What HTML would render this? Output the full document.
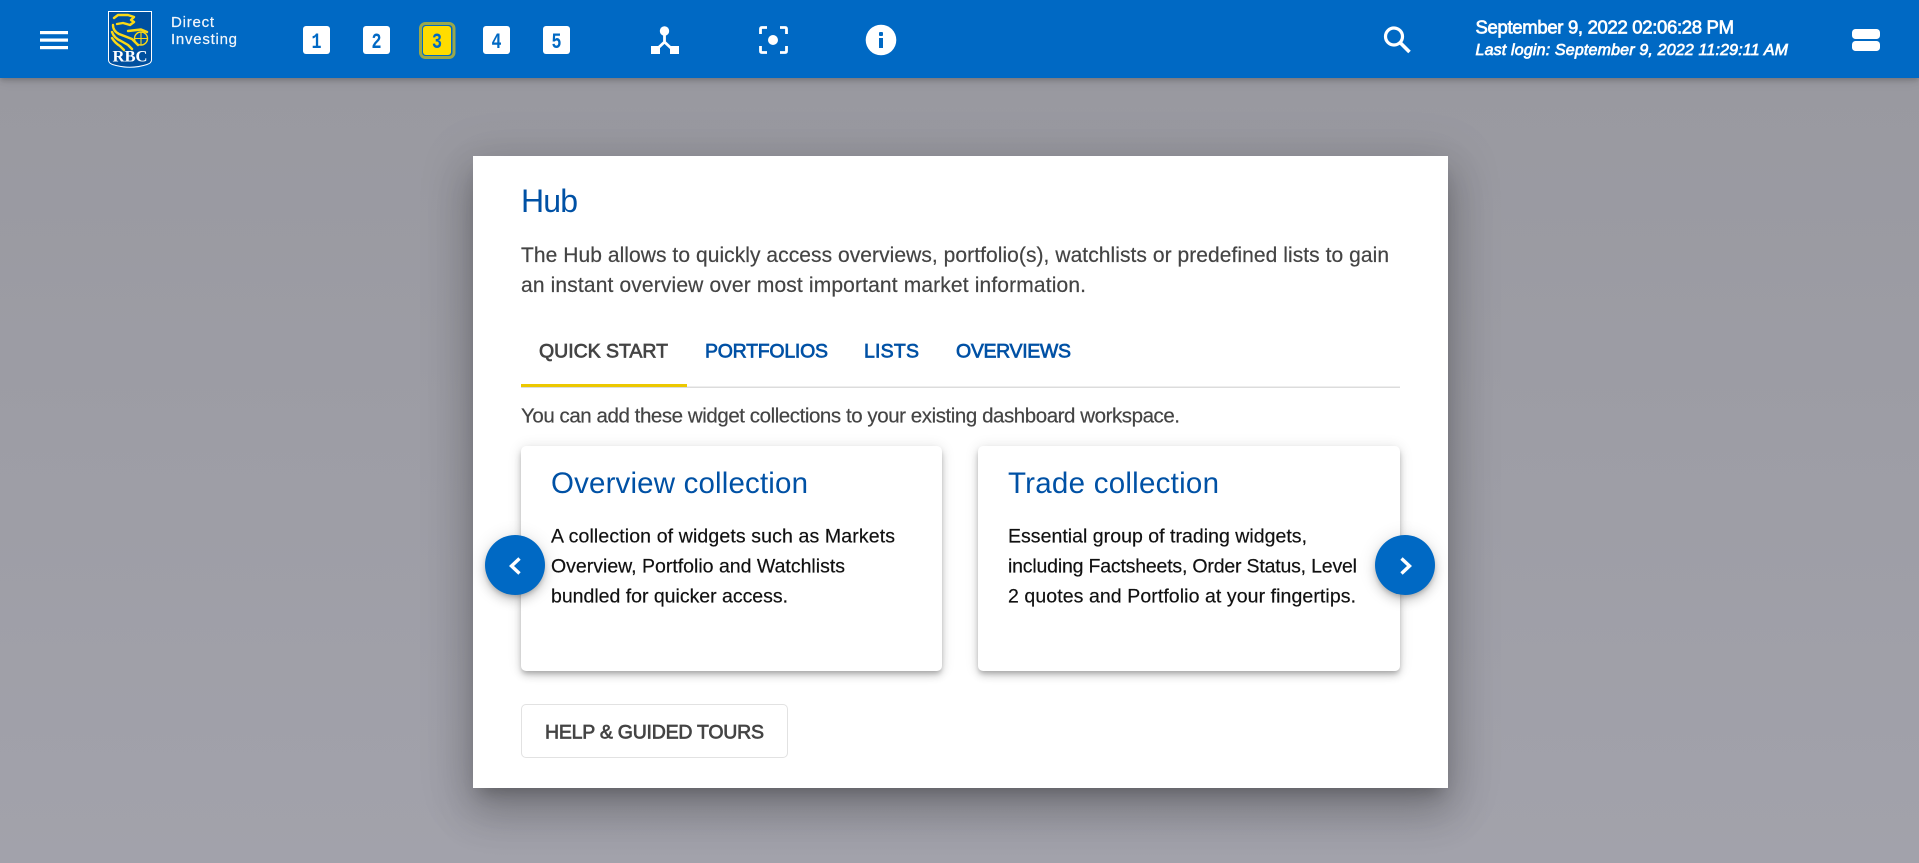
<!DOCTYPE html>
<html lang="en"><head><meta charset="utf-8"><title>Hub</title>
<style>
html,body{margin:0;padding:0;width:1919px;height:863px;overflow:hidden}
body{position:relative;background:linear-gradient(#98989f,#a2a2ab);font-family:"Liberation Sans",sans-serif}
.a{position:absolute;box-sizing:border-box}
#hd{left:0;top:0;width:1919px;height:78px;background:#0069c4;box-shadow:0 2px 4px -1px rgba(0,0,0,.14),0 4px 5px rgba(0,0,0,.08),0 1px 14px rgba(0,0,0,.08)}
#modal{left:473px;top:156px;width:975px;height:632px;background:#fff;box-shadow:0 11px 15px -7px rgba(0,0,0,.22),0 24px 38px 3px rgba(0,0,0,.17),0 9px 46px 8px rgba(0,0,0,.13)}
.card{top:446px;height:225px;background:#fff;border-radius:5px;box-shadow:0 3px 5px -1px rgba(0,0,0,.2),0 5px 8px rgba(0,0,0,.14),0 1px 14px rgba(0,0,0,.12)}
.fab{top:535px;width:60px;height:60px;border-radius:50%;background:#0069c4;box-shadow:0 3px 5px -1px rgba(0,0,0,.2),0 6px 10px rgba(0,0,0,.14),0 1px 18px rgba(0,0,0,.12)}
#btn{left:521px;top:704px;width:267px;height:54px;background:#fff;border:1px solid #e2e2e2;border-radius:5px}
#top{left:0;top:0;width:1919px;height:863px}
text{font-family:"Liberation Sans",sans-serif;white-space:pre}
.m{stroke-width:.7px;stroke:currentColor}
.r{stroke-width:.2px;stroke:currentColor}
</style></head><body>
<div class="a" id="hd"></div>
<div class="a" id="modal"></div>
<div class="a card" style="left:521px;width:421px"></div>
<div class="a card" style="left:978px;width:422px"></div>
<div class="a fab" style="left:485px"></div>
<div class="a fab" style="left:1375px"></div>
<div class="a" id="btn"></div>
<svg class="a" id="top" width="1919" height="863" viewBox="0 0 1919 863" xmlns="http://www.w3.org/2000/svg">
<!-- hamburger -->
<g fill="#fff"><rect x="40" y="31" width="28" height="3.200"/><rect x="40" y="38.500" width="28" height="3.200"/><rect x="40" y="46" width="28" height="3.200"/></g>
<!-- logo -->
<path d="M108.500 11.500H151.500V60Q151.500 63 147 64.500Q130 70 112.500 64.500Q108.500 63 108.500 60Z" fill="#00509f" stroke="#fff" stroke-width="1"/>
<g fill="none" stroke="#fbd914" stroke-width="2.400" stroke-linejoin="round" stroke-linecap="round">
<path d="M114 18L118 15H128L134 17L131 20L134 22L130 25L123 23L117 24"/>
<path d="M113 25Q113 31 119 34L132 39L138 45"/>
<path d="M112 32Q114 38 121 41L128 45L132 49"/>
<path d="M112 38Q115 43 120 46L124 50"/>
<path d="M128 31L141 29.500L147 32"/>
<circle cx="141" cy="38.500" r="6.500" stroke-width="1.400"/>
<path d="M134.500 38.500H147.500M141 32V45" stroke-width="1.100"/>
</g>
<text x="112.500" y="61.500" fill="#fff" font-size="16" font-weight="700" textLength="35" lengthAdjust="spacingAndGlyphs" style="font-family:'Liberation Serif',serif">RBC</text>
<text class="r" x="171" y="27" fill="#f2f6fb" color="#f2f6fb" font-size="15" textLength="43" lengthAdjust="spacing">Direct</text>
<text class="r" x="171" y="44" fill="#f2f6fb" color="#f2f6fb" font-size="15" textLength="66" lengthAdjust="spacing">Investing</text>
<!-- numbered workspaces -->
<rect x="303" y="26" width="27" height="28" rx="3" fill="#fff"/>
<rect x="363" y="26" width="27" height="28" rx="3" fill="#fff"/>
<rect x="420.500" y="23.500" width="33.500" height="34" rx="5" fill="#0069c4" stroke="#9aa84a" stroke-width="3"/>
<rect x="423" y="26" width="28" height="29" rx="3" fill="#ffdc00"/>
<rect x="483" y="26" width="27" height="28" rx="3" fill="#fff"/>
<rect x="543" y="26" width="27" height="28" rx="3" fill="#fff"/>
<g font-size="22" font-weight="700" fill="#0069c4">
<text x="311.500" y="48" textLength="10" lengthAdjust="spacingAndGlyphs" style="font-family:'Liberation Mono',monospace">1</text>
<text x="371.500" y="48" textLength="10" lengthAdjust="spacingAndGlyphs" style="font-family:'Liberation Mono',monospace">2</text>
<text x="432" y="48" textLength="10" lengthAdjust="spacingAndGlyphs" style="font-family:'Liberation Mono',monospace">3</text>
<text x="491.500" y="48" textLength="10" lengthAdjust="spacingAndGlyphs" style="font-family:'Liberation Mono',monospace">4</text>
<text x="551.500" y="48" textLength="10" lengthAdjust="spacingAndGlyphs" style="font-family:'Liberation Mono',monospace">5</text>
</g>
<!-- hierarchy icon -->
<g fill="#fff"><circle cx="664.500" cy="31" r="4.700"/><rect x="651" y="46" width="9" height="8"/><rect x="670" y="46" width="9" height="8"/></g>
<path d="M664.500 33V43M657 49L664.500 42L672 49" fill="none" stroke="#fff" stroke-width="2.800"/>
<!-- focus icon -->
<path d="M760.500 34V29Q760.500 27.500 762 27.500H767M780 27.500H785Q786.500 27.500 786.500 29V34M786.500 46V51Q786.500 52.500 785 52.500H780M767 52.500H762Q760.500 52.500 760.500 51V46" fill="none" stroke="#fff" stroke-width="2.800"/>
<circle cx="773" cy="40" r="5" fill="#fff"/>
<!-- info icon -->
<circle cx="881" cy="40" r="15.300" fill="#fff"/>
<rect x="879" y="38" width="4" height="10" fill="#0069c4"/><rect x="879" y="32" width="4" height="4" rx="1" fill="#0069c4"/>
<!-- search -->
<circle cx="1394" cy="36.500" r="8.500" fill="none" stroke="#fff" stroke-width="3.200"/>
<path d="M1400.500 43L1409.500 52" stroke="#fff" stroke-width="3.600" fill="none"/>
<!-- date -->
<text class="m" x="1475.500" y="33.500" fill="#fff" color="#fff" font-size="18.500" textLength="258.500" lengthAdjust="spacing">September 9, 2022 02:06:28 PM</text>
<text class="m" x="1475.500" y="55" fill="#fff" color="#fff" font-size="16" font-style="italic" textLength="312.500" lengthAdjust="spacing">Last login: September 9, 2022 11:29:11 AM</text>
<!-- server icon -->
<g fill="#fff"><rect x="1852" y="29" width="28" height="10" rx="3.500"/><rect x="1852" y="41" width="28" height="10" rx="3.500"/></g>
<!-- modal -->
<text x="521" y="212" fill="#0051a5" font-size="32" textLength="57" lengthAdjust="spacing">Hub</text>
<text class="r" x="521" y="262" fill="#444" color="#444" font-size="21" textLength="868" lengthAdjust="spacing">The Hub allows to quickly access overviews, portfolio(s), watchlists or predefined lists to gain</text>
<text class="r" x="521" y="292" fill="#444" color="#444" font-size="21" textLength="565" lengthAdjust="spacing">an instant overview over most important market information.</text>
<text class="m" x="539" y="357.500" fill="#444" color="#444" font-size="19.500" textLength="129" lengthAdjust="spacing">QUICK START</text>
<text class="m" x="705" y="357.500" fill="#0051a5" color="#0051a5" font-size="19.500" textLength="123" lengthAdjust="spacing">PORTFOLIOS</text>
<text class="m" x="864" y="357.500" fill="#0051a5" color="#0051a5" font-size="19.500" textLength="55" lengthAdjust="spacing">LISTS</text>
<text class="m" x="956" y="357.500" fill="#0051a5" color="#0051a5" font-size="19.500" textLength="115" lengthAdjust="spacing">OVERVIEWS</text>
<rect x="521" y="386.500" width="879" height="1.500" fill="#dcdcdc"/>
<rect x="521" y="384" width="166" height="3" fill="#ecc800"/>
<text class="r" x="521" y="422.500" fill="#444" color="#444" font-size="20.500" textLength="659" lengthAdjust="spacing">You can add these widget collections to your existing dashboard workspace.</text>
<!-- card 1 -->
<text x="551" y="493" fill="#0051a5" font-size="29.500" textLength="257" lengthAdjust="spacing">Overview collection</text>
<g fill="#111" color="#111" font-size="19.500">
<text class="r" x="551" y="542.500" textLength="344" lengthAdjust="spacing">A collection of widgets such as Markets</text>
<text class="r" x="551" y="572.500" textLength="294" lengthAdjust="spacing">Overview, Portfolio and Watchlists</text>
<text class="r" x="551" y="602.500" textLength="237" lengthAdjust="spacing">bundled for quicker access.</text>
</g>
<!-- card 2 -->
<text x="1008" y="493" fill="#0051a5" font-size="29.500" textLength="211" lengthAdjust="spacing">Trade collection</text>
<g fill="#111" color="#111" font-size="19.500">
<text class="r" x="1008" y="542.500" textLength="299" lengthAdjust="spacing">Essential group of trading widgets,</text>
<text class="r" x="1008" y="572.500" textLength="349" lengthAdjust="spacing">including Factsheets, Order Status, Level</text>
<text class="r" x="1008" y="602.500" textLength="348" lengthAdjust="spacing">2 quotes and Portfolio at your fingertips.</text>
</g>
<!-- chevrons -->
<path d="M519.500 558.500L511.500 566L519.500 573.500" fill="none" stroke="#fff" stroke-width="3.400"/>
<path d="M1401.500 558.500L1409.500 566L1401.500 573.500" fill="none" stroke="#fff" stroke-width="3.400"/>
<!-- button -->
<text class="m" x="545" y="738.500" fill="#444" color="#444" font-size="19.500" textLength="219" lengthAdjust="spacing">HELP &amp; GUIDED TOURS</text>
</svg>
</body></html>
